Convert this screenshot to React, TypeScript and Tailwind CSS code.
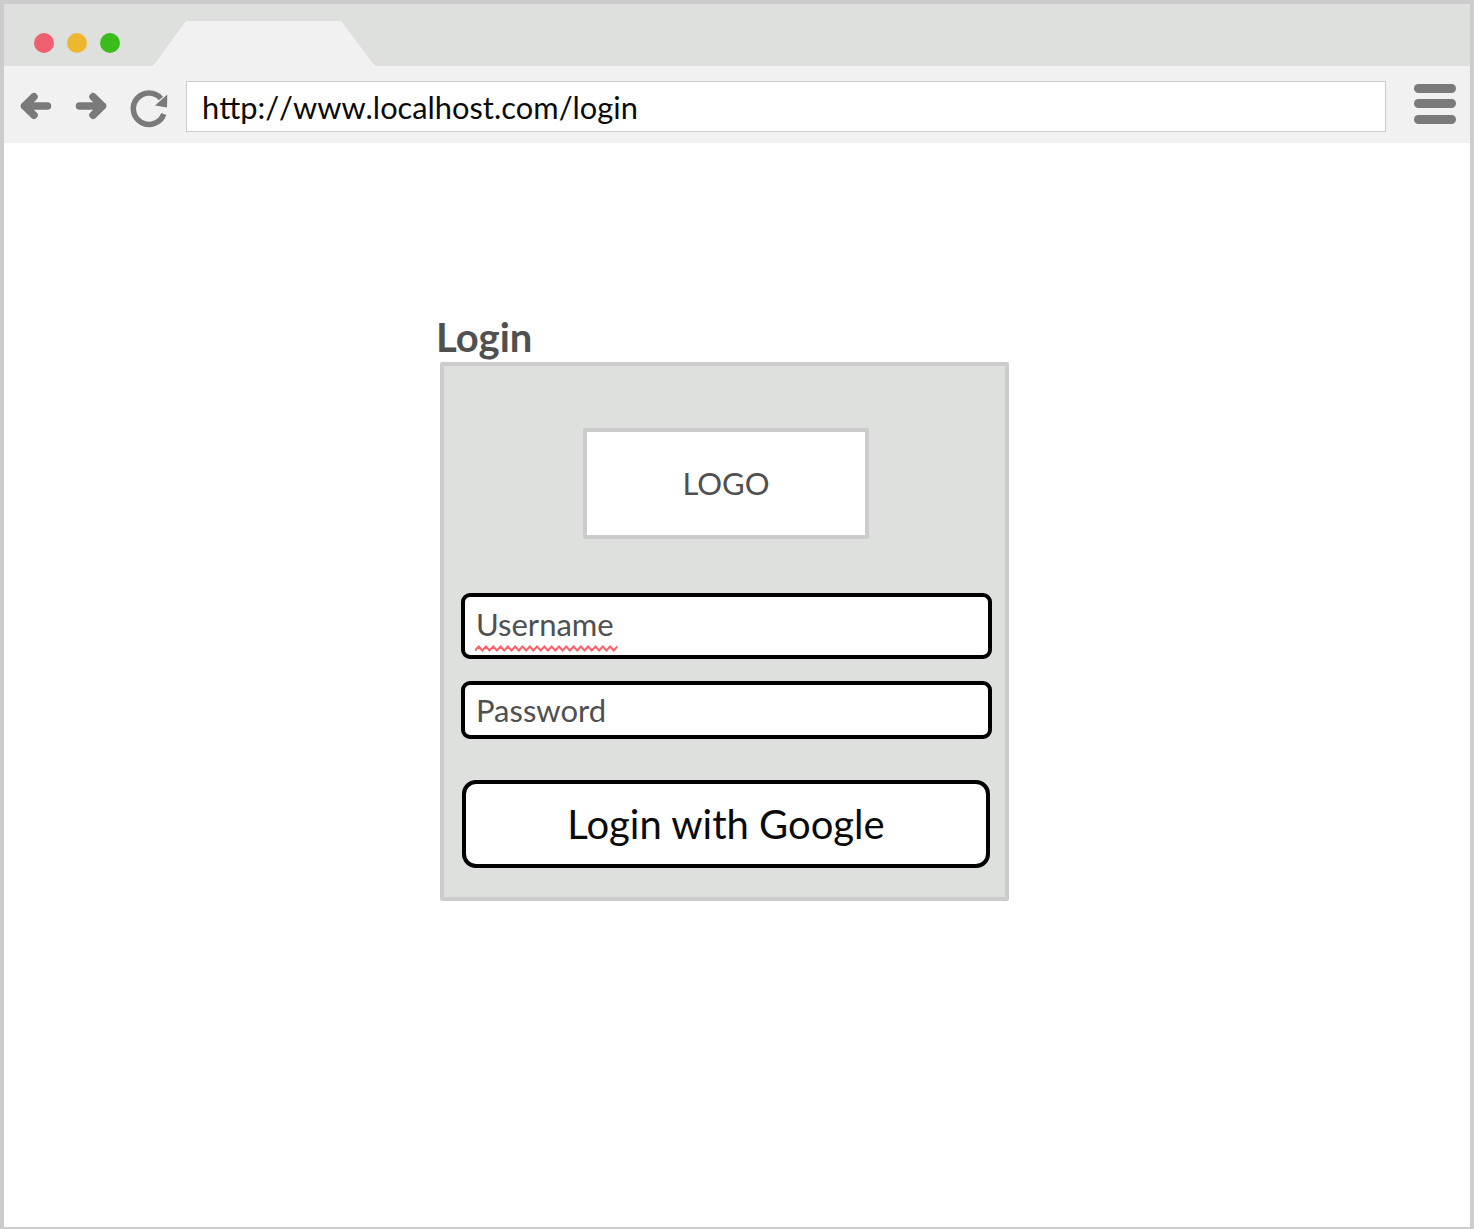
import React from 'react'

const squiggle = Array.from({ length: 40 }, (_, i) => `${(i * 3.65).toFixed(2)},${i % 2 === 0 ? 5.5 : 1.5}`).join(' ')

function Arrow({ flip = false }: { flip?: boolean }) {
  return (
    <svg width="32" height="30" viewBox="0 0 32 30" fill="none" className={flip ? 'rotate-180' : ''}>
      <path d="M14 5.75 L4.5 15 L14 24.25 M4.5 15 H27.5" stroke="#7a7a7a" strokeWidth="7.5" strokeLinecap="round" strokeLinejoin="round" />
    </svg>
  )
}

export default function App() {
  return (
    <div className="flex h-[1229px] w-[1474px] flex-col border-t-4 border-r-4 border-b-2 border-l-4 border-[#cccccc] bg-white font-['Lato',sans-serif]">
      {/* Tab strip */}
      <div className="flex h-[62px] shrink-0 items-end bg-[#dee0dd]">
        <div className="flex items-center gap-[13px] self-start pt-[29px] pl-[30px]">
          <span className="h-5 w-5 rounded-full bg-[#ee5f70]" />
          <span className="h-5 w-5 rounded-full bg-[#eeb732]" />
          <span className="h-5 w-5 rounded-full bg-[#3cbc1c]" />
        </div>
        <div className="ml-[33px] h-[45px] w-[222px] bg-[#f1f1f1] [clip-path:polygon(33px_0,188px_0,100%_100%,0_100%)]" />
      </div>

      {/* Toolbar */}
      <div className="flex h-[77px] shrink-0 items-center bg-[#f1f1f1] pl-4">
        <div className="flex items-center">
          <div className="mt-[3px]">
            <Arrow />
          </div>
          <div className="mt-[3px] ml-[23px]">
            <Arrow flip />
          </div>
          <svg width="40" height="40" viewBox="0 0 40 40" fill="none" className="mt-2 ml-[22px]">
            <path d="M34.8 25 A15.7 15.7 0 1 1 32 9.5" stroke="#7a7a7a" strokeWidth="5.5" />
            <path d="M38.3 5.5 L38 18.5 L26 16.5 Z" fill="#7a7a7a" />
          </svg>
        </div>
        <div className="mt-1 ml-[17px] flex h-[51px] w-[1200px] items-center border border-[#cccccc] bg-white pt-1 pl-[15px] text-[30.8px] text-[#0a0a0a] [font-kerning:none]">
          http://www.localhost.com/login
        </div>
        <div className="mb-[2px] ml-[28px] flex w-[42px] flex-col gap-[6.5px]">
          <span className="h-[9px] rounded-full bg-[#7a7a7a]" />
          <span className="h-[9px] rounded-full bg-[#7a7a7a]" />
          <span className="h-[9px] rounded-full bg-[#7a7a7a]" />
        </div>
      </div>

      {/* Page */}
      <div className="flex-1 pt-[172px] pl-[432px]">
        <h1 className="mb-[2px] text-[40px] leading-[45px] font-bold text-[#505050]">Login</h1>
        <div className="ml-1 flex h-[539px] w-[569px] flex-col items-start rounded-[2px] border-4 border-[#cccccc] bg-[#dee0dd] pt-[62px]">
          <div className="ml-[139px] flex h-[111px] w-[286px] items-center justify-center rounded-[2px] border-4 border-[#cccccc] bg-white pb-[1px] text-[31px] text-[#505050]">
            LOGO
          </div>
          <div className="relative mt-[54px] ml-[17px] flex h-[66px] w-[531px] items-center rounded-[9px] border-4 border-black bg-white pb-1 pl-[11px] text-[31px] text-[#505050]">
            Username
            <svg width="143" height="7" viewBox="0 0 143 7" fill="none" className="absolute top-[48px] left-[10px]">
              <polyline points={squiggle} stroke="#ff5f68" strokeWidth="2" />
            </svg>
          </div>
          <div className="mt-[22px] ml-[17px] flex h-[58px] w-[531px] items-center rounded-[9px] border-4 border-black bg-white pl-[11px] text-[31px] text-[#505050]">
            Password
          </div>
          <div className="mt-[41px] ml-[18px] flex h-[88px] w-[528px] items-center justify-center rounded-[14px] border-4 border-black bg-white text-[40px] text-[#0a0a0a]">
            Login with Google
          </div>
        </div>
      </div>
    </div>
  )
}
